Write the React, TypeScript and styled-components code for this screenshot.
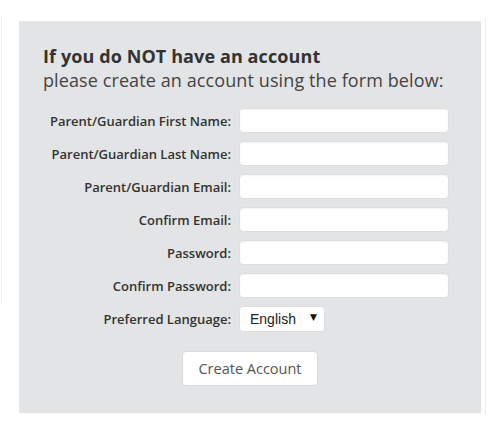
import React from "react";
import styled, { createGlobalStyle } from "styled-components";

const GlobalStyle = createGlobalStyle`
  html, body { margin: 0; padding: 0; background: #ffffff; }
  body { font-family: "Open Sans", "Liberation Sans", sans-serif; }
`;

const Page = styled.div`
  display: flex;
  align-items: flex-start;
  width: 500px;
  height: 440px;
`;

const Rule = styled.div<{ $h: number; $ml: number }>`
  flex: none;
  width: 1px;
  height: ${(p) => p.$h}px;
  margin-top: 17px;
  margin-left: ${(p) => p.$ml}px;
  background: #eeeeee;
`;

const Panel = styled.section`
  flex: none;
  box-sizing: border-box;
  width: 462px;
  height: 392px;
  margin-top: 21px;
  margin-left: 17px;
  padding: 23px 32px 0 24px;
  background: #e2e4e5;
`;

const Heading = styled.h2`
  margin: 0 0 16px;
  font-size: 18px;
  line-height: normal;
  letter-spacing: 0.1px;
  font-weight: 400;
  color: #444;
  strong {
    display: block;
    font-weight: 700;
    color: #333;
  }
`;

const FormGrid = styled.div`
  display: grid;
  grid-template-columns: 1fr 210px;
  column-gap: 8px;
  row-gap: 8px;
  align-items: center;
`;

const Label = styled.label`
  text-align: right;
  font-size: 13px;
  font-weight: 600;
  color: #333;
`;

const Input = styled.input`
  box-sizing: border-box;
  width: 210px;
  height: 25px;
  margin: 0;
  border: 1px solid #dcdedf;
  border-radius: 4px;
  background: #fff;
  box-shadow: inset 0 1px 2px rgba(0, 0, 0, 0.05);
`;

const SelectWrap = styled.div`
  position: relative;
  width: 86px;
  height: 26px;
`;

const Select = styled.select`
  box-sizing: border-box;
  width: 100%;
  height: 100%;
  margin: 0;
  padding: 0 0 0 10px;
  appearance: none;
  border: 1px solid #dcdedf;
  border-radius: 4px;
  background: #fff;
  font-family: "Liberation Sans", Arial, sans-serif;
  font-size: 14px;
  color: #222;
`;

const Arrow = styled.span`
  position: absolute;
  right: 8px;
  top: 6px;
  font-family: "DejaVu Sans", sans-serif;
  font-size: 9px;
  color: #111;
  pointer-events: none;
`;

const ButtonRow = styled.div`
  display: flex;
  justify-content: center;
  margin: 19px 0 0 8px;
`;

const Button = styled.button`
  box-sizing: border-box;
  width: 136px;
  height: 35px;
  border: 1px solid #d8dadb;
  border-radius: 4px;
  background: #fff;
  font-family: "Open Sans", sans-serif;
  font-size: 14.5px;
  color: #555;
`;

const fields = [
  { id: "fn", label: "Parent/Guardian First Name:", type: "text" },
  { id: "ln", label: "Parent/Guardian Last Name:", type: "text" },
  { id: "em", label: "Parent/Guardian Email:", type: "email" },
  { id: "cem", label: "Confirm Email:", type: "email" },
  { id: "pw", label: "Password:", type: "password" },
  { id: "cpw", label: "Confirm Password:", type: "password" },
];

export default function App() {
  return (
    <>
      <GlobalStyle />
      <Page>
        <Rule $h={286} $ml={1} />
        <Panel>
          <Heading>
            <strong>If you do NOT have an account</strong>
            please create an account using the form below:
          </Heading>
          <FormGrid>
            {fields.map((f) => (
              <React.Fragment key={f.id}>
                <Label htmlFor={f.id}>{f.label}</Label>
                <Input id={f.id} type={f.type} />
              </React.Fragment>
            ))}
            <Label htmlFor="lang">Preferred Language:</Label>
            <SelectWrap>
              <Select id="lang" defaultValue="en">
                <option value="en">English</option>
              </Select>
              <Arrow>▼</Arrow>
            </SelectWrap>
          </FormGrid>
          <ButtonRow>
            <Button type="button">Create Account</Button>
          </ButtonRow>
        </Panel>
        <Rule $h={398} $ml={4} />
      </Page>
    </>
  );
}
